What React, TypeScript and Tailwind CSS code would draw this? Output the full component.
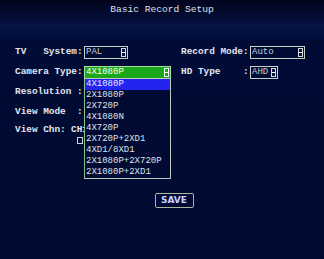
import { ReactNode } from "react";

const mono = "font-['Liberation_Mono','DejaVu_Sans_Mono',monospace]";

const cameraTypes = [
  "4X1080P",
  "2X1080P",
  "2X720P",
  "4X1080N",
  "4X720P",
  "2X720P+2XD1",
  "4XD1/8XD1",
  "2X1080P+2X720P",
  "2X1080P+2XD1",
];

const Arrow = ({ light }: { light?: boolean }) => (
  <span
    className={`ml-auto flex h-[9px] w-[5px] items-center justify-center border ${
      light ? "border-white bg-[#1aa81a]" : "border-[#d8dcd8] bg-[#0a1440]"
    }`}
  >
    <span className="h-[1px] w-[3px] bg-white" />
  </span>
);

const Select = ({
  value,
  width,
}: {
  value: string;
  width: string;
}) => (
  <div
    className={`flex h-[13px] items-center border border-[#c8cec8] pl-[1px] pr-[1px] ${width}`}
  >
    <span className="text-[9px] leading-none text-[#c8ccd8]">{value}</span>
    <Arrow />
  </div>
);

const Label = ({ children }: { children: ReactNode }) => (
  <span className="w-[69px] shrink-0 whitespace-pre text-[9.4px] font-bold leading-none text-[#e4e6ee]">
    {children}
  </span>
);

const App = () => {
  return (
    <div
      className={`relative h-[259px] w-[324px] overflow-hidden bg-[linear-gradient(180deg,#01031a_0px,#071245_26px,#000c36_40px,#000a30_100%)] ${mono}`}
    >
      <div className="pt-[4px] text-center text-[9.6px] leading-[12px] text-[#dfe2ea] whitespace-pre">
        Basic Record Setup
      </div>

      <div className="mt-[26px] flex flex-col pl-[15px]">
        <div className="flex h-[20px] items-center">
          <Label>{"TV   System:"}</Label>
          <Select value="PAL" width="w-[44px]" />
          <div className="ml-[53px] flex items-center">
            <Label>Record Mode:</Label>
            <Select value="Auto" width="w-[55px]" />
          </div>
        </div>

        <div className="flex h-[20px] items-center">
          <Label>Camera Type:</Label>
          <div className="relative">
            <div className="flex h-[13px] w-[87px] items-center border border-[#a8e0a8] bg-[#1aa81a] pl-[1px] pr-[1px]">
              <span className="text-[9px] leading-none text-white">
                4X1080P
              </span>
              <Arrow light />
            </div>
            <div className="absolute left-0 top-[12px] z-10 w-[87px] border border-[#c0c8c0] border-l-[#88c088] bg-[#000a32]">
              {cameraTypes.map((t, i) => (
                <div
                  key={t}
                  className={`flex h-[11px] items-center pl-[1px] text-[9px] leading-none ${
                    i === 0
                      ? "bg-[#2424f0] text-[#e8e8ff]"
                      : "text-[#dfe2ea]"
                  }`}
                >
                  {t}
                </div>
              ))}
            </div>
          </div>
          <div className="ml-[10px] flex items-center">
            <Label>{"HD Type    :"}</Label>
            <Select value="AHD" width="w-[28px]" />
          </div>
        </div>

        <div className="flex h-[20px] items-center">
          <Label>Resolution :</Label>
        </div>

        <div className="flex h-[19px] items-center">
          <Label>{"View Mode  :"}</Label>
        </div>

        <div className="flex h-[19px] items-start pt-[4px]">
          <span className="w-[56px] shrink-0 whitespace-pre text-[9.4px] font-bold leading-none text-[#e4e6ee]">
            View Chn:
          </span>
          <div className="flex flex-col items-start">
            <span className="text-[9.4px] font-bold leading-none text-[#e4e6ee]">
              CH1
            </span>
            <span className="ml-[6px] mt-[3px] h-[7px] w-[6px] border border-[#d0d4dc]" />
          </div>
        </div>
      </div>

      <div className="mt-[53px] flex justify-center pl-[24px]">
        <div className="flex h-[15px] w-[39px] items-center justify-center rounded-[2px] border-[1.5px] border-[#a8b898] bg-[#000a34]">
          <span className="font-['DejaVu_Sans',sans-serif] text-[9px] font-bold leading-none text-[#c8d0ff]">
            SAVE
          </span>
        </div>
      </div>
    </div>
  );
};

export default App;
